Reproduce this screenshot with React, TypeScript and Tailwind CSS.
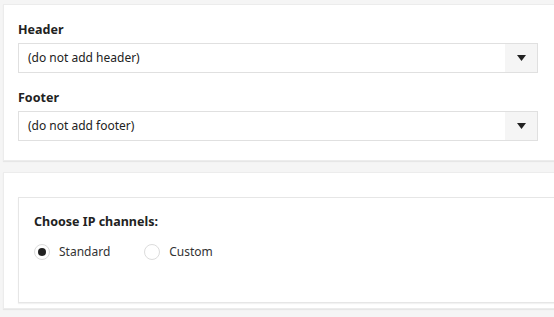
const font = { fontFamily: '"Segoe UI", "Noto Sans", "Open Sans", sans-serif' }

const Select = ({ value }: { value: string }) => {
  return (
    <div className="flex h-[30px] w-[520px] items-stretch border border-[#e0e0e0] bg-white">
      <div className="flex flex-1 items-center pl-[9px] text-[12px] text-[#222]">{value}</div>
      <div className="flex w-[32px] items-center justify-center bg-[#f5f5f5]">
        <svg width="9" height="6" viewBox="0 0 9 6">
          <path d="M0 0 H9 L4.5 6 Z" fill="#222" />
        </svg>
      </div>
    </div>
  )
}

const Radio = ({ label, checked }: { label: string; checked?: boolean }) => {
  return (
    <label className="flex items-center gap-[9px] text-[12px] text-[#333]">
      <span className="flex h-[16px] w-[16px] items-center justify-center rounded-full border border-[#dcdcdc] bg-white">
        {checked && <span className="h-[8px] w-[8px] rounded-full bg-[#222]" />}
      </span>
      {label}
    </label>
  )
}

export default function App() {
  return (
    <div className="h-[317px] w-[554px] overflow-hidden bg-[#f5f5f5] pl-[3px] pt-[4px]" style={font}>
      <div className="w-[600px] border border-[#ececec] bg-white pb-[19px] pl-[14px] pt-[16px] shadow-[0_1px_1px_rgba(0,0,0,0.06)]">
        <div className="mb-[4px] text-[12.5px] font-bold leading-[18px] text-[#222]">Header</div>
        <Select value="(do not add header)" />
        <div className="mb-[4px] mt-[16px] text-[12.5px] font-bold leading-[18px] text-[#222]">Footer</div>
        <Select value="(do not add footer)" />
      </div>

      <div className="mt-[11px] w-[600px] border border-[#ececec] bg-white pb-[5px] pl-[14px] pt-[24px] shadow-[0_1px_1px_rgba(0,0,0,0.06)]">
        <div className="h-[106px] border border-[#e6e6e6] pl-[15px] pt-[15px] shadow-[0_1px_1px_rgba(0,0,0,0.05)]">
          <div className="text-[12.5px] font-bold leading-[18px] text-[#222]">Choose IP channels:</div>
          <div className="mt-[12px] flex items-center gap-[34px] leading-[18px]">
            <Radio label="Standard" checked />
            <Radio label="Custom" />
          </div>
        </div>
      </div>
    </div>
  )
}
